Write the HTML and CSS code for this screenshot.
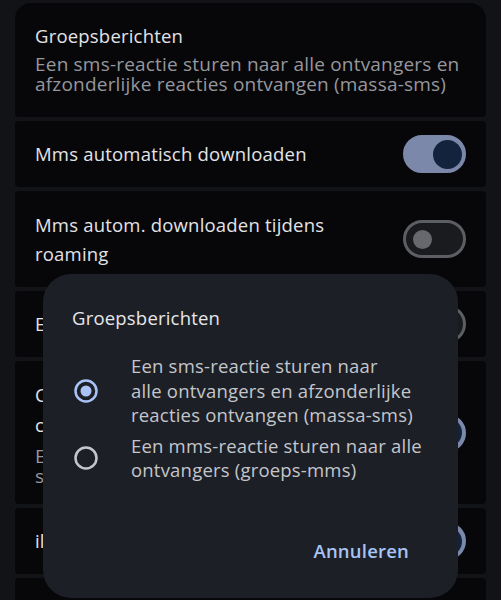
FILE: index.html
```html
<!DOCTYPE html>
<html>
<head>
  <title>Groepsberichten</title>
  <link rel="stylesheet" href="styles.css">
</head>
<body>
  <div class="settings">
    <div class="card card-first">
      <div class="card-text">
        <div class="card-title">Groepsberichten</div>
        <div class="card-sub">Een sms-reactie sturen naar alle ontvangers en<br>afzonderlijke reacties ontvangen (massa-sms)</div>
      </div>
    </div>

    <div class="card card-row">
      <div class="card-title">Mms automatisch downloaden</div>
      <span class="toggle on"><span class="thumb"></span></span>
    </div>

    <div class="card card-row card-tall">
      <div class="card-title card-title-wrap">Mms autom. downloaden tijdens<br>roaming</div>
      <span class="toggle"><span class="thumb"></span></span>
    </div>

    <div class="card card-row">
      <div class="card-title">Eenvoudige tekens gebruiken</div>
      <span class="toggle"><span class="thumb"></span></span>
    </div>

    <div class="card card-row card-big">
      <div class="card-text">
        <div class="card-title card-title-wide">Chatfuncties van contacten<br>controleren</div>
        <div class="card-sub">Een melding tonen als berichten<br>sneller verzonden kunnen worden</div>
      </div>
      <span class="toggle on"><span class="thumb"></span></span>
    </div>

    <div class="card card-row">
      <div class="card-title">illustraties tonen</div>
      <span class="toggle on"><span class="thumb"></span></span>
    </div>

    <div class="card card-row card-last"></div>
  </div>

  <div class="dialog">
    <div class="dialog-title">Groepsberichten</div>

    <label class="option">
      <svg class="radio" width="24" height="24" viewBox="0 0 24 24">
        <circle cx="12" cy="12" r="10.5" fill="none" stroke="#a9c3f6" stroke-width="2.5"/>
        <circle cx="12" cy="12" r="5.5" fill="#a9c3f6"/>
      </svg>
      <span class="option-text">Een sms-reactie sturen naar<br>alle ontvangers en afzonderlijke<br>reacties ontvangen (massa-sms)</span>
    </label>

    <label class="option">
      <svg class="radio" width="24" height="24" viewBox="0 0 24 24">
        <circle cx="12" cy="12" r="10.5" fill="none" stroke="#c4c6cc" stroke-width="2.5"/>
      </svg>
      <span class="option-text">Een mms-reactie sturen naar alle<br>ontvangers (groeps-mms)</span>
    </label>

    <div class="dialog-actions">
      <button class="text-button">Annuleren</button>
    </div>
  </div>
</body>
</html>
```

FILE: styles.css
```css
body {
  margin: 0;
  background-color: #121317;
  font-family: "Open Sans", Roboto, sans-serif;
  letter-spacing: 0.2px;
  height: 600px;
  overflow: hidden;
}
.settings {
  display: flex;
  flex-direction: column;
  gap: 4px;
  padding: 3px 15px 0 15px;
}
.card {
  background-color: #07070a;
  border-radius: 4px;
  padding: 0 20px;
}
.card-first {
  border-radius: 16px 16px 4px 4px;
  padding: 21px 20px 23px 20px;
}
.card-row {
  display: flex;
  align-items: center;
  justify-content: space-between;
  min-height: 66px;
}
.card-tall {
  min-height: 96px;
}
.card-big {
  min-height: 143px;
}
.card-last {
  min-height: 80px;
}
.card-title {
  color: #e3e3e6;
  font-size: 18.5px;
  line-height: 24px;
}
.card-title-wrap {
  line-height: 29px;
}
.card-title-wide {
  line-height: 30px;
}
.card-sub {
  color: #96979c;
  font-size: 19px;
  line-height: 20px;
  margin-top: 6px;
}
.toggle {
  display: flex;
  align-items: center;
  box-sizing: border-box;
  width: 63px;
  height: 38px;
  flex-shrink: 0;
  border-radius: 19px;
  border: 3px solid #5c5e63;
  background-color: #1a1b1f;
  padding: 0 7px;
}
.toggle .thumb {
  width: 19px;
  height: 19px;
  border-radius: 50%;
  background-color: #66686d;
}
.toggle.on {
  justify-content: flex-end;
  border-color: #7b88a9;
  background-color: #7b88a9;
  padding: 0 1px;
}
.toggle.on .thumb {
  width: 29px;
  height: 29px;
  background-color: #14233d;
}

.dialog {
  position: absolute;
  left: 43px;
  top: 274px;
  width: 415px;
  height: 324px;
  box-sizing: border-box;
  background-color: #1c1f25;
  border-radius: 28px;
  padding: 32px 16px 28px 31px;
  display: flex;
  flex-direction: column;
}
.dialog-title {
  color: #e6e7ea;
  font-size: 18.5px;
  line-height: 24px;
  margin-left: -2px;
  margin-bottom: 24px;
}
.option {
  display: flex;
  align-items: center;
  gap: 33px;
  margin-bottom: 6px;
}
.radio {
  flex-shrink: 0;
}
.option-text {
  color: #c4c6cc;
  font-size: 18.5px;
  line-height: 24.5px;
  white-space: nowrap;
}
.dialog-actions {
  margin-top: auto;
  display: flex;
  justify-content: flex-end;
  padding-right: 21px;
}
.text-button {
  background: none;
  border: none;
  color: #a8c4f5;
  font-family: "Open Sans", Roboto, sans-serif;
  font-size: 18.5px;
  font-weight: 600;
  letter-spacing: 0.2px;
  height: 40px;
  padding: 0 12px;
}
```
